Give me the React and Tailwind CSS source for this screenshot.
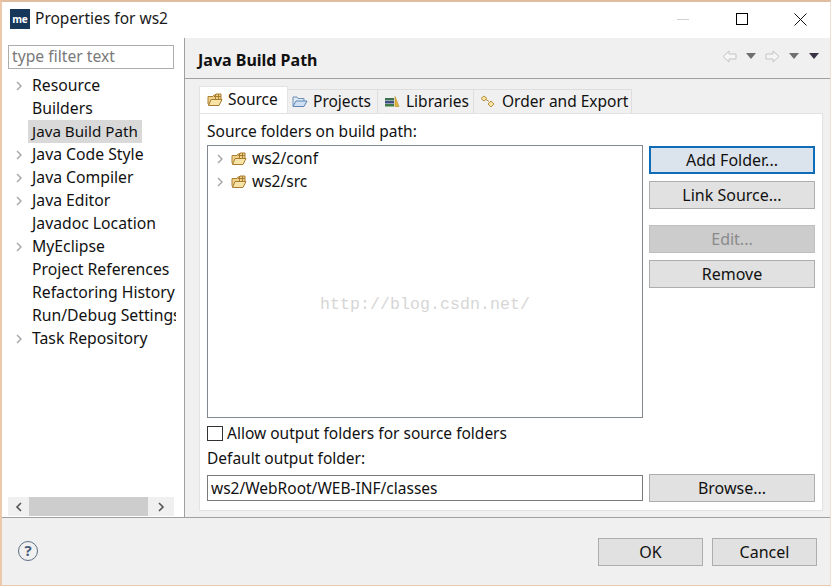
import React from 'react';

const FOLDER_SRC = (
  <svg width="16" height="14" viewBox="0 0 16 14" className="shrink-0">
    <path d="M1 3.500h5l1-1.500h2V1h5v5.500l-1 0L11.500 12.500H2.500L1 11z" fill="#f0d28a" stroke="#a97f32" />
    <path d="M4 6.500h11l-3 6H1.500z" fill="#f8e3a6" stroke="#a57c30" />
    <path d="M8.500 1v5M11.500 1v5M7 3.500h7" stroke="#a57c30" fill="none" />
  </svg>
);

const Chevron = ({ color = '#a8a8a8' }) => (
  <svg width="6" height="10" viewBox="0 0 6 10" className="shrink-0">
    <path d="M1 1l4 4-4 4" fill="none" stroke={color} strokeWidth="1.500" />
  </svg>
);

const Caret = ({ color = '#6f6f6f' }) => (
  <svg width="10" height="6" viewBox="0 0 10 6" className="shrink-0">
    <path d="M0 0h10L5 6z" fill={color} />
  </svg>
);

const NavArrow = ({ flip }) => (
  <svg width="15" height="13" viewBox="0 0 15 13" className={flip ? 'shrink-0 -scale-x-100' : 'shrink-0'}>
    <path d="M1 6.500L7 1v3h7v5H7v3z" fill="#f5f5f5" stroke="#c4c4c4" />
  </svg>
);

const treeItems = [
  { label: 'Resource', arrow: true },
  { label: 'Builders' },
  { label: 'Java Build Path', selected: true },
  { label: 'Java Code Style', arrow: true },
  { label: 'Java Compiler', arrow: true },
  { label: 'Java Editor', arrow: true },
  { label: 'Javadoc Location' },
  { label: 'MyEclipse', arrow: true },
  { label: 'Project References' },
  { label: 'Refactoring History' },
  { label: 'Run/Debug Settings' },
  { label: 'Task Repository', arrow: true },
];

const Btn = ({ children, className = '' }) => (
  <div className={`flex items-center justify-center h-[28px] bg-[#e1e1e1] border border-[#adadad] ${className}`}>
    {children}
  </div>
);

const App = () => {
  return (
    <div
      className="w-[831px] h-[586px] flex flex-col bg-white text-[16px] text-[#111] border-t-2 border-l-2 border-r border-b border-t-[#e0bd9f] border-l-[#ecc9ab] border-r-[#f3ddcc] border-b-[#e8c8ae] overflow-hidden"
      style={{ fontFamily: '"Noto Sans", "Open Sans", sans-serif' }}
    >
      {/* Title bar */}
      <div className="h-[36px] shrink-0 flex items-center">
        <div className="mb-[2px] ml-[8px] w-[20px] h-[20px] bg-[#17375a] flex items-center justify-center text-white text-[10px] font-bold leading-none">me</div>
        <span className="mb-[2px] ml-[5px] text-[15.500px] text-[#1a1a1a]">Properties for ws2</span>
        <div className="mb-[2px] ml-auto flex items-center">
          <div className="w-[12px] h-px bg-[#d0d0d0]"></div>
          <div className="ml-[47px] w-[12px] h-[12px] border border-black"></div>
          <svg width="13" height="13" viewBox="0 0 13 13" className="ml-[46px] mr-[23px]">
            <path d="M.5.500l12 12M12.500.500l-12 12" stroke="#111" fill="none" />
          </svg>
        </div>
      </div>

      <div className="flex flex-1 min-h-0">
        {/* Left tree */}
        <div className="w-[182px] shrink-0 flex flex-col">
          <div className="ml-[6px] mr-[10px] mt-[7px] h-[24px] border border-[#adadad] px-[3px] flex items-center text-[#7a7a7a] text-[15.700px]">type filter text</div>
          <div className="mt-[5px] mr-[8px] flex-1 min-h-0 overflow-hidden">
            {treeItems.map((item) => (
              <div key={item.label} className="h-[23px] flex items-center whitespace-nowrap">
                <div className="w-[26px] shrink-0 flex justify-end pr-[6px]">
                  {item.arrow && <Chevron />}
                </div>
                <div className={`px-[4px] h-[23px] leading-[23px] ${item.selected ? 'bg-[#d9d9d9] text-[15.200px]' : 'text-[15.750px]'}`}>{item.label}</div>
              </div>
            ))}
          </div>
          <div className="ml-[6px] mr-[10px] h-[19px] mb-[1px] bg-[#f0f0f0] flex items-center shrink-0">
            <div className="w-[21px] flex justify-center"><svg width="7" height="10" viewBox="0 0 7 10"><path d="M6 1L2 5l4 4" fill="none" stroke="#555" strokeWidth="1.600" /></svg></div>
            <div className="w-[119px] h-full bg-[#cdcdcd]"></div>
            <div className="flex-1 flex justify-center"><svg width="7" height="10" viewBox="0 0 7 10"><path d="M1 1l4 4-4 4" fill="none" stroke="#555" strokeWidth="1.600" /></svg></div>
          </div>
        </div>

        {/* Right page */}
        <div className="flex-1 flex flex-col bg-[#f0f0f0] border-l border-[#a0a0a0] min-w-0">
          <div className="h-[41px] shrink-0 border-b border-[#a0a0a0] flex items-center pl-[13px]">
            <span className="mt-[4px] font-bold text-[16px] text-[#111]">Java Build Path</span>
            <div className="ml-auto flex items-center mr-[11px] mb-[4px]">
              <NavArrow />
              <div className="ml-[9px]"><Caret /></div>
              <div className="ml-[9px]"><NavArrow flip /></div>
              <div className="ml-[9px]"><Caret /></div>
              <div className="ml-[10px]"><Caret color="#3a3346" /></div>
            </div>
          </div>

          {/* Tabs */}
          <div className="ml-[14px] mr-[7px] mt-[7px] flex-1 flex flex-col">
            <div className="flex items-end h-[27px] shrink-0">
              <div className="w-[89px] h-[27px] bg-white border-t border-x border-[#e3e3e3] flex items-center pl-[7px] gap-[5px] pb-[1px]">
                {FOLDER_SRC}<span className="text-[15.500px]">Source</span>
              </div>
              <div className="w-[90px] h-[24px] bg-[#f0f0f0] border-t border-r border-[#dedede] flex items-center pl-[4px] gap-[5px]">
                <svg width="16" height="13" viewBox="0 0 16 13" className="shrink-0">
                  <path d="M1 11V2h4l1 1.500h6V6" fill="#dfeaf5" stroke="#6d8fb5" />
                  <path d="M1 11.500l3-5.500h11l-3 5.500z" fill="#cfe0f2" stroke="#5f86b3" />
                </svg>
                <span className="text-[15.500px]">Projects</span>
              </div>
              <div className="w-[96px] h-[24px] bg-[#f0f0f0] border-t border-r border-[#dedede] flex items-center pl-[6px] gap-[6px]">
                <svg width="16" height="13" viewBox="0 0 16 13" className="shrink-0">
                  <rect x="1" y="3" width="9" height="2.500" fill="#3d6f52" />
                  <rect x="1" y="6" width="9" height="2.500" fill="#3f4d86" />
                  <rect x="1" y="9" width="9" height="2.500" fill="#3e7a46" />
                  <path d="M11 1.500l4 10h-4z" fill="#e3b63c" stroke="#b48a24" strokeWidth=".6" />
                </svg>
                <span className="text-[15.500px]">Libraries</span>
              </div>
              <div className="w-[158px] h-[24px] bg-[#f0f0f0] border-t border-r border-[#dedede] flex items-center pl-[6px] gap-[6px]">
                <svg width="16" height="14" viewBox="0 0 16 14" className="shrink-0">
                  <path d="M4 1L1 3.500 4 6l3-2.500zM11 6L8 9l3 3 3-3z" fill="#f5e3a8" stroke="#b8913a" />
                  <path d="M6 4.500l3 2" stroke="#b8913a" fill="none" />
                </svg>
                <span className="text-[15.500px]">Order and Export</span>
              </div>
            </div>

            <div className="h-[398px] bg-white border border-[#e3e3e3] shrink-0 flex flex-col pl-[7px] pr-[7px]">
              <div className="h-[31px] shrink-0 flex items-end pb-[4px] text-[15.500px] leading-[20px]">Source folders on build path:</div>
              <div className="flex gap-[6px] h-[273px] shrink-0">
                <div className="relative w-[436px] border border-[#828790] pt-[1px]">
                  {['ws2/conf', 'ws2/src'].map((p) => (
                    <div key={p} className="h-[23px] flex items-center pl-[9px]">
                      <Chevron />
                      <div className="ml-[8px]">{FOLDER_SRC}</div>
                      <span className="ml-[5px] text-[15.500px]">{p}</span>
                    </div>
                  ))}
                  {/* watermark */}
                  <div className="absolute left-[112px] top-[147px] text-[#d6d6d6] text-[16.500px] tracking-[0.100px] whitespace-nowrap" style={{ fontFamily: '"Liberation Mono", monospace' }}>http://blog.csdn.net/</div>
                </div>
                <div className="flex-1 flex flex-col pt-[1px]">
                  <Btn className="!bg-[#dbe3ec] !border-2 !border-[#0f6cb8]">Add Folder...</Btn>
                  <Btn className="mt-[7px]">Link Source...</Btn>
                  <Btn className="mt-[16px] !bg-[#cccccc] !border-[#bfbfbf] text-[#8a8a8a]">Edit...</Btn>
                  <Btn className="mt-[7px]">Remove</Btn>
                </div>
              </div>
              <div className="mt-[8px] flex items-center h-[15px]">
                <div className="w-[16px] h-[15px] border border-[#333] bg-white"></div>
                <span className="ml-[4px] text-[15.500px]">Allow output folders for source folders</span>
              </div>
              <div className="mt-[7px] h-[20px] leading-[20px] text-[15.500px]">Default output folder:</div>
              <div className="mt-[6px] flex gap-[6px] h-[28px]">
                <div className="w-[436px] h-[26px] mt-[1px] border border-[#7a7a7a] flex items-center pl-[3px] pt-[1px] text-[15.500px]">ws2/WebRoot/WEB-INF/classes</div>
                <Btn className="flex-1">Browse...</Btn>
              </div>
            </div>
          </div>
        </div>
      </div>

      {/* Footer */}
      <div className="h-[68px] shrink-0 bg-[#f0f0f0] border-t border-[#a0a0a0] flex items-center">
        <div className="mb-[2px] ml-[16px] w-[20px] h-[20px] rounded-full border border-[#5d6f86] flex items-center justify-center text-[#4a5e7c] font-bold text-[15px] leading-none">?</div>
        <div className="ml-auto flex gap-[9px] mr-[13px]">
          <Btn className="w-[105px]">OK</Btn>
          <Btn className="w-[105px]">Cancel</Btn>
        </div>
      </div>
    </div>
  );
};

export default App;
